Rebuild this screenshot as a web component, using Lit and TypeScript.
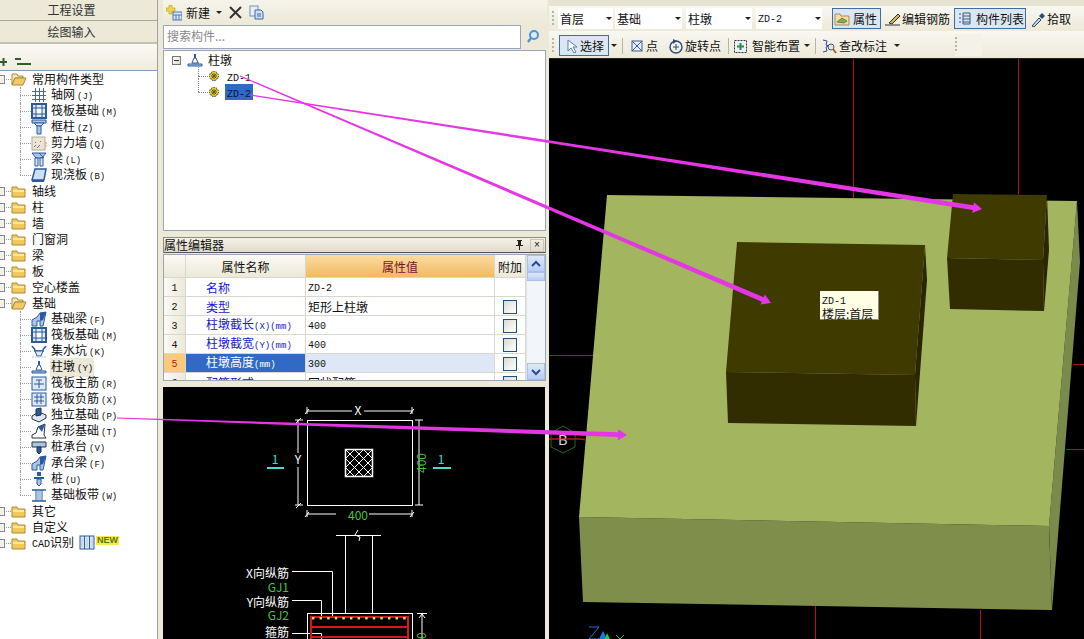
import { LitElement, css, html, svg } from "lit";
import { customElement } from "lit/decorators.js";

const ic = (body: unknown, w = 16, h = 16) =>
  html`<svg class="ic" width=${w} height=${h} viewBox="0 0 ${w} ${h}">${body}</svg>`;

const B = "#2a5a9c";
const L = "#a9c6ea";

const icons: Record<string, unknown> = {
  closed: svg`<path d="M1 4h5l1 2h7v8H1z" fill="#f3c95c" stroke="#a88a3a"/><path d="M2 7h11v2H2z" fill="#fbe9a8"/>`,
  open: svg`<path d="M1 3h5l1 2h5v2H4l-3 7z" fill="#f7e7b4" stroke="#a88a3a"/><path d="M4 7h11l-3 7H1z" fill="#f1ca6a" stroke="#a88a3a"/>`,
  grid: svg`<path d="M1 4.5h14M1 8.5h14M1 12.5h14M4.5 1v14M8.5 1v14M12.5 1v14" stroke="#3a6cb4" fill="none"/>`,
  raft: svg`<rect x="1" y="1" width="14" height="14" fill="#dfe9f6" stroke=${B} stroke-width="2"/><rect x="5" y="5" width="6" height="6" fill="#fff" stroke=${B}/><path d="M1 5h4M11 5h4M1 11h4M11 11h4M5 1v4M11 1v4M5 11v4M11 11v4" stroke=${B}/>`,
  column: svg`<path d="M1 1h14v3H1z" fill=${L} stroke=${B}/><path d="M3 4h10l-3 3H6z" fill="#dfe9f6" stroke=${B}/><path d="M6 7h4v8H6z" fill=${L} stroke=${B}/>`,
  wall: svg`<rect x="1" y="2" width="13" height="13" fill="#ece4d6" stroke="#b9a98f"/><path d="M3 12l2-2M6 13l3-3M4 7l1 1M9 6l1 1" stroke="#777"/><path d="M14 8h2M14 11h2" stroke="#e89a3c"/>`,
  beam: svg`<path d="M1 2h14l-4 5H5z" fill=${L} stroke=${B}/><path d="M4 7h3v8H4zM9 7h3v8H9z" fill="#dfe9f6" stroke=${B}/><path d="M8 2l5 5" stroke=${B}/>`,
  slab: svg`<path d="M4 2h11l-2 11H1z" fill="#cfe0f5" stroke=${B} stroke-width="1.5"/><path d="M1 13h12v2H1z" fill=${B}/>`,
  fbeam: svg`<path d="M1 15V9l5-3 3-4 6-1-3 14H9v-5H6v5z" fill=${L} stroke=${B}/><path d="M9 2l6-1-3 8-3 1z" fill=${B}/>`,
  pit: svg`<path d="M1 3c1 2 3 2 3 5h8c0-3 2-3 3-5" fill="none" stroke=${B} stroke-width="1.5"/><path d="M4 8l2 5h4l2-5z" fill="#dfe9f6" stroke=${B}/><path d="M1 14h14" stroke=${L} stroke-dasharray="2 1"/>`,
  pier: svg`<path d="M1 12h14v2H1z" fill=${L} stroke=${B}/><path d="M5 11l2-5h2l2 5z" fill="#fff" stroke=${B}/><path d="M7 2h2v4H7z" fill=${B}/>`,
  rmain: svg`<rect x="1" y="2" width="14" height="13" fill="#dfe9f6" stroke=${B}/><path d="M3 9h10M8 5v8M5 5h6" stroke=${B} fill="none"/>`,
  rneg: svg`<rect x="1" y="2" width="14" height="13" fill="#dfe9f6" stroke=${B}/><path d="M3 6h10M3 10h10M6 3v10M10 3v10" stroke=${B} fill="none"/>`,
  iso: svg`<path d="M1 9l7-4 7 3v3l-7 4-7-3z" fill="#dfe9f6" stroke="#234"/><path d="M5 2l5-1v7l-5 1z" fill=${B} stroke="#234"/>`,
  strip: svg`<path d="M1 15v-3l4-2 2-6 7-3-1 11 2 3z" fill="#fff" stroke="#234"/><path d="M7 4l7-3-3 8z" fill=${B}/>`,
  cap: svg`<path d="M1 3h14v5H1z" fill=${L} stroke="#234"/><path d="M6 8h4v5l-2 2-2-2z" fill=${B} stroke="#234"/>`,
  pile: svg`<path d="M6 1h4v4H6zM3 6h10v2H3z" fill=${B}/><path d="M6 8h4v5l-2 2-2-2z" fill=${L} stroke=${B}/>`,
  band: svg`<path d="M1 3h14M1 14h14" stroke=${B} stroke-width="1.5"/><path d="M5 3v11M11 3v11" stroke=${B}/><rect x="6" y="4" width="4" height="9" fill=${L}/>`,
};

const icon = (name: string) => ic(icons[name]);

// ascii runs get a narrower mono font, so they keep the 6px width next to 12px cjk
const txt = (s: string) =>
  html`<span>${s
    .split(/([\x21-\x7e]+)/)
    .map((p, i) => (i % 2 ? html`<span class="l">${p}</span>` : p))}</span>`;

type Leaf = [string, string, string];
const common: Leaf[] = [
  ["轴网", "(J)", "grid"],
  ["筏板基础", "(M)", "raft"],
  ["框柱", "(Z)", "column"],
  ["剪力墙", "(Q)", "wall"],
  ["梁", "(L)", "beam"],
  ["现浇板", "(B)", "slab"],
];
const found: Leaf[] = [
  ["基础梁", "(F)", "fbeam"],
  ["筏板基础", "(M)", "raft"],
  ["集水坑", "(K)", "pit"],
  ["柱墩", "(Y)", "pier"],
  ["筏板主筋", "(R)", "rmain"],
  ["筏板负筋", "(X)", "rneg"],
  ["独立基础", "(P)", "iso"],
  ["条形基础", "(T)", "strip"],
  ["桩承台", "(V)", "cap"],
  ["承台梁", "(F)", "fbeam"],
  ["桩", "(U)", "pile"],
  ["基础板带", "(W)", "band"],
];

const props = [
  ["名称", "ZD-2", false],
  ["类型", "矩形上柱墩", true],
  ["柱墩截长(X)(mm)", "400", true],
  ["柱墩截宽(Y)(mm)", "400", true],
  ["柱墩高度(mm)", "300", true],
  ["配筋形式", "网状配筋", true],
] as [string, string, boolean][];

// tapered pen stroke with a head, as drawn over the screenshot
function arrow(x1: number, y1: number, x2: number, y2: number) {
  const len = Math.hypot(x2 - x1, y2 - y1);
  const ux = (x2 - x1) / len;
  const uy = (y2 - y1) / len;
  const nx = -uy;
  const ny = ux;
  const hx = x2 - ux * 9;
  const hy = y2 - uy * 9;
  const pts = [
    [x1 + nx * 0.6, y1 + ny * 0.6],
    [hx + nx * 2.4, hy + ny * 2.4],
    [hx + nx * 5.5, hy + ny * 5.5],
    [x2, y2],
    [hx - nx * 5.5, hy - ny * 5.5],
    [hx - nx * 2.4, hy - ny * 2.4],
    [x1 - nx * 0.6, y1 - ny * 0.6],
  ];
  return svg`<polygon points=${pts.map((p) => p.join(",")).join(" ")} fill="#e436e4"/>`;
}

@customElement("app-root")
export class AppRoot extends LitElement {
  static styles = css`
    :host {
      display: block;
      position: relative;
      width: 1084px;
      height: 639px;
      overflow: hidden;
      background: #ece9d8;
      font: 12px/16px "Noto Sans CJK SC", "Liberation Sans", sans-serif;
      color: #111;
    }
    .l {
      font-family: "Liberation Mono", monospace;
      font-size: 10px;
    }
    .ic {
      display: block;
      flex: none;
    }
    .win {
      display: grid;
      grid-template-columns: 158px 389px 2px 535px;
      height: 639px;
    }

    /* left column */
    .left {
      display: flex;
      flex-direction: column;
      height: 639px;
      border-right: 1px solid #a0a0a0;
      box-sizing: border-box;
    }
    .tab {
      height: 20px;
      line-height: 19px;
      text-align: center;
      padding-right: 14px;
      border-bottom: 1px solid #aca899;
      background: #ece9d8;
      color: #333;
    }
    .tab + .tab {
      height: 21px;
      line-height: 21px;
      border-bottom: 2px solid #c4c1b0;
    }
    .mini {
      height: 26px;
      display: flex;
      align-items: flex-end;
      gap: 6px;
      padding-bottom: 3px;
      background: linear-gradient(#fbfaf5, #efede0);
      box-sizing: border-box;
    }
    .tree {
      flex: 1;
      background: #fff;
      border-top: 1px solid #7f9db9;
    }
    .row {
      position: relative;
      display: flex;
      align-items: center;
      height: 16px;
      white-space: nowrap;
    }
    .row.top {
      padding-left: 11px;
      gap: 5px;
    }
    .row.top::before {
      content: "";
      position: absolute;
      left: 4px;
      top: 8px;
      width: 7px;
      border-top: 1px dotted #999;
    }
    .row.leaf {
      padding-left: 31px;
      gap: 3px;
    }
    .row.leaf::before {
      content: "";
      position: absolute;
      left: 20px;
      top: 0;
      height: 16px;
      border-left: 1px dotted #999;
    }
    .row.leaf.last::before {
      height: 8px;
    }
    .row.leaf::after {
      content: "";
      position: absolute;
      left: 20px;
      top: 8px;
      width: 11px;
      border-top: 1px dotted #999;
    }
    .exp {
      position: absolute;
      left: -4px;
      top: 4px;
      width: 7px;
      height: 7px;
      border: 1px solid #888;
      background: #f4f2e8;
    }
    .leaf .name {
      padding: 0 1px;
    }
    .leaf .name .l {
      font-size: 9px;
      margin-left: 2px;
    }
    .cur {
      background: #ece9d8;
    }
    .badge {
      font: bold 9px/9px "Liberation Sans", sans-serif;
      background: #ffe94a;
      color: #557a10;
      padding: 0 1px;
      margin: -6px 0 0 -4px;
    }

    /* middle column */
    .mid {
      display: flex;
      flex-direction: column;
      padding-left: 5px;
      height: 639px;
    }
    .bar {
      height: 25px;
      display: flex;
      align-items: center;
      gap: 6px;
      padding-left: 3px;
      background: linear-gradient(#f6f4ea, #ece9d8);
    }
    .new {
      margin-left: -2px;
    }
    .drop {
      width: 0;
      height: 0;
      border: 3px solid transparent;
      border-top: 3px solid #222;
      border-bottom: 0;
      flex: none;
    }
    .search {
      display: flex;
      height: 24px;
      margin-right: 1px;
    }
    .search .box {
      flex: 1;
      height: 22px;
      line-height: 19px;
      padding-left: 3px;
      background: #fff;
      border: 1px solid #9aa7b5;
      color: #888;
    }
    .search .go {
      width: 25px;
      height: 24px;
      display: grid;
      place-items: center;
    }
    .list {
      height: 181px;
      margin-top: 1px;
      margin-right: 1px;
      background: #fff;
      border: 1px solid #9aa7b5;
      box-sizing: border-box;
    }
    .pier-row {
      height: 16px;
      margin-top: 1px;
      padding-left: 8px;
      display: flex;
      align-items: center;
      gap: 6px;
    }
    .pier-row .nm {
      margin-left: -1px;
    }
    .mbox {
      width: 7px;
      height: 7px;
      border: 1px solid #777;
      background: linear-gradient(135deg, #fff, #ddd9c8);
      position: relative;
      flex: none;
    }
    .mbox::after {
      content: "";
      position: absolute;
      left: 1px;
      top: 3px;
      width: 5px;
      height: 1px;
      background: #333;
    }
    .zd {
      position: relative;
      height: 16px;
      display: flex;
      align-items: center;
      padding-left: 44px;
      gap: 5px;
    }
    .zd::before {
      content: "";
      position: absolute;
      left: 34px;
      top: -6px;
      height: 14px;
      border-left: 1px dotted #888;
    }
    .zd::after {
      content: "";
      position: absolute;
      left: 34px;
      top: 8px;
      width: 10px;
      border-top: 1px dotted #888;
    }
    .zd .v {
      padding: 0 2px;
      height: 16px;
      line-height: 16px;
    }
    .zd .v.sel {
      background: #316ac5;
      color: #06163a;
    }
    .strip {
      height: 6px;
    }
    .head {
      height: 16px;
      display: flex;
      align-items: center;
      justify-content: space-between;
      border: 1px solid #8f8c7c;
      border-bottom-color: #555;
      background: linear-gradient(#f5f3e8, #dedbca);
      margin-right: 1px;
      box-sizing: border-box;
    }
    .head .tools {
      display: flex;
      align-items: center;
      gap: 5px;
      padding-right: 1px;
    }
    .xbtn {
      width: 12px;
      height: 11px;
      border: 1px solid #c9c6b6;
      text-align: center;
      font: 10px/10px "Liberation Sans", sans-serif;
    }
    .tablewrap {
      position: relative;
      display: flex;
      height: 127px;
      margin-top: 1px;
      margin-right: 1px;
      border: 1px solid #9aa7b5;
      box-sizing: border-box;
      background: #fff;
      overflow: hidden;
    }
    .table {
      display: grid;
      grid-template-columns: 22px 120px 189px 31px;
      grid-template-rows: 23px;
      grid-auto-rows: 19px;
      width: 362px;
      height: 125px;
      overflow: hidden;
    }
    .table > div {
      box-sizing: border-box;
      border-right: 1px solid #d8d8d0;
      border-bottom: 1px solid #d8d8d0;
      padding-top: 1px;
      display: flex;
      align-items: center;
      white-space: nowrap;
    }
    .table .th {
      justify-content: center;
      background: linear-gradient(#fbfaf5, #ece9d8);
    }
    .table .th.val {
      background: linear-gradient(#fbdca0, #f1b963);
      color: #7a1030;
      padding-left: 0;
    }
    .table .n {
      justify-content: center;
      background: linear-gradient(90deg, #fbfaf5, #ece9d8);
    }
    .table .n.on {
      background: #fbc97c;
      color: #b3261e;
    }
    .table .k {
      padding-left: 20px;
      color: #1818c8;
    }
    .table .k .l {
      font-size: 9px;
    }
    .table .k.on {
      background: #316ac5;
      color: #fff;
    }
    .table .val {
      padding-left: 2px;
    }
    .table .val.on {
      background: #dde7f5;
    }
    .table .c {
      justify-content: center;
    }
    .chk {
      width: 12px;
      height: 12px;
      border: 1px solid #1c5180;
      background: linear-gradient(135deg, #dcdcd4, #fff);
    }
    .sb {
      flex: 1;
      display: flex;
      flex-direction: column;
      background: #f2f6fb;
      border-left: 1px solid #e4e4dc;
    }
    .sb i {
      display: grid;
      place-items: center;
      height: 17px;
      background: linear-gradient(#dfe8fb, #b7cdf5);
      border: 1px solid #a9c0e8;
      box-sizing: border-box;
    }
    .sb i.thumb {
      height: 9px;
    }
    .sb i.end {
      margin-top: auto;
    }
    .cad {
      margin-top: 6px;
      height: 252px;
      background: #000;
      display: block;
    }
    .cad text {
      font-family: "Noto Sans CJK SC", sans-serif;
      font-size: 12px;
      fill: #fff;
    }
    .cad text.g {
      fill: #3fc83f;
    }
    .cad text.c {
      fill: #40e0d0;
    }

    /* right column */
    .right {
      display: flex;
      flex-direction: column;
      height: 639px;
      grid-column: 4;
    }
    .cut {
      height: 6px;
      background: #e6e3d2;
    }
    .tb {
      display: flex;
      align-items: center;
      white-space: nowrap;
      background: linear-gradient(#f9f8f1, #ece9d8);
    }
    .tb.one {
      height: 25px;
    }
    .tb.two {
      height: 28px;
      box-sizing: border-box;
      border-bottom: 1px solid #222;
      padding-top: 2px;
    }
    .grip {
      width: 2px;
      height: 16px;
      margin: 0 4px 0 3px;
      flex: none;
      background: repeating-linear-gradient(#b8b5a4 0 2px, transparent 2px 4px);
    }
    .combo {
      display: flex;
      align-items: center;
      justify-content: space-between;
      width: 66px;
      height: 21px;
      padding: 0 1px 0 2px;
      margin-left: 4px;
      background: #fff;
      box-sizing: border-box;
      flex: none;
    }
    .combo:nth-of-type(1) {
      width: 55px;
      margin-left: 0;
    }
    .combo:nth-of-type(2) {
      width: 67px;
      margin-left: 2px;
    }
    .tbtn {
      display: flex;
      align-items: center;
      gap: 4px;
      height: 21px;
      box-sizing: border-box;
      padding: 0 2px;
      flex: none;
    }
    .tbtn.on {
      border: 1px solid #3a6ea5;
      background: #dce6f2;
    }
    .attr {
      margin-left: 10px;
      width: 49px;
      padding: 0 1px;
      gap: 3px;
    }
    .rebar {
      gap: 2px;
      margin-left: 1px;
    }
    .parts {
      margin-left: 2px;
      width: 72px;
      gap: 3px;
    }
    .pick {
      margin-left: 2px;
      gap: 1px;
    }
    .choose {
      margin-left: 1px;
      width: 50px;
      padding-left: 3px;
      gap: 1px;
    }
    .dp {
      margin-left: 2px;
    }
    .point {
      gap: 2px;
    }
    .turn {
      margin-left: 8px;
      gap: 1px;
      padding-left: 0;
    }
    .smart {
      margin-left: -1px;
      padding: 0;
      gap: 3px;
    }
    .dsmart {
      margin-left: 4px;
    }
    .check {
      padding: 0;
      gap: 2px;
    }
    .dcheck {
      margin-left: 7px;
    }
    .sep {
      width: 1px;
      height: 16px;
      background: #b8b5a4;
      margin: 0 5px;
      flex: none;
    }
    .float {
      position: absolute;
      left: 955px;
      top: 34px;
      width: 27px;
      height: 22px;
      background: #f4f2e8;
      display: flex;
      align-items: center;
    }
    .float .grip {
      margin: 0;
    }
    .scene {
      display: block;
      flex: 1;
      background: #000;
    }
    .scene text {
      font-family: "Liberation Sans", sans-serif;
    }
    .tip {
      position: absolute;
      left: 820px;
      top: 291px;
      width: 59px;
      height: 29px;
      box-sizing: border-box;
      background: #ffffe6;
      border-right: 1px solid #888;
      border-bottom: 1px solid #888;
      padding: 2px 0 0 2px;
      line-height: 12px;
      color: #111;
    }
    .over {
      position: absolute;
      left: 0;
      top: 0;
      pointer-events: none;
    }
  `;

  private leaf(l: Leaf, last: boolean, cur = false) {
    return html`<div class="row leaf ${last ? "last" : ""}">
      ${icon(l[2])}
      <span class="name ${cur ? "cur" : ""}">${l[0]}<span class="l">${l[1]}</span></span>
    </div>`;
  }

  private top(name: string, open = false, extra: unknown = "") {
    return html`<div class="row top">
      <span class="exp"></span>
      ${icon(open ? "open" : "closed")}${txt(name)}${extra}
    </div>`;
  }

  private left() {
    return html`<div class="left">
      <div class="tab">工程设置</div>
      <div class="tab">绘图输入</div>
      <div class="mini">
        ${ic(svg`<path d="M0 9h7M3.5 5v8" stroke="#2d5c2d" stroke-width="2"/>`, 9, 14)}
        ${ic(svg`<path d="M0 6h6M2 11h14" stroke="#2d5c2d" stroke-width="2"/>`, 16, 14)}
      </div>
      <div class="tree">
        ${this.top("常用构件类型", true)}
        ${common.map((l, i) => this.leaf(l, i === common.length - 1))}
        ${["轴线", "柱", "墙", "门窗洞", "梁", "板", "空心楼盖"].map((n) => this.top(n))}
        ${this.top("基础", true)}
        ${found.map((l, i) => this.leaf(l, i === found.length - 1, l[0] === "柱墩"))}
        ${this.top("其它")} ${this.top("自定义")}
        ${this.top(
          "CAD识别",
          false,
          html`${ic(svg`<rect x="1" y="1" width="14" height="13" fill="#dfe9f6" stroke=${B}/><path d="M5.5 1v13M10.5 1v13" stroke=${B}/><path d="M3 3v9M8 3v9M13 3v9" stroke=${L}/>`)}<span class="badge">NEW</span>`
        )}
      </div>
    </div>`;
  }

  private mid() {
    const gear = ic(
      svg`<circle cx="6" cy="6" r="4.5" fill="#e8d020" stroke="#333" stroke-dasharray="1.5 1"/><path d="M3 6h6M6 3v6M3.5 3.5l5 5M8.5 3.5l-5 5" stroke="#554"/>`,
      12,
      12
    );
    return html`<div class="mid">
      <div class="bar">
        ${ic(svg`<path d="M3 0h3v3h3v3H6v3H3V6H0V3h3z" fill="#f3d34a" stroke="#b89a20" stroke-width=".6"/><rect x="7" y="7" width="9" height="8" fill="#dbe6f5" stroke="#4a78b5"/><path d="M7 10h9M10 10v5M13 10v5" stroke="#4a78b5"/>`)}
        <span class="new">新建</span>
        <span class="drop"></span>
        ${ic(svg`<path d="M2 2l11 11M13 2L2 13" stroke="#333" stroke-width="2"/>`, 15, 15)}
        ${ic(svg`<rect x="1" y="1" width="8" height="10" fill="#e8effa" stroke="#6d8fc0"/><path d="M6 5h6l2 2v7H6z" fill="#cfe0f5" stroke="#3a67a8"/><path d="M8 9h4M8 11h4" stroke="#3a67a8"/>`)}
      </div>
      <div class="search">
        <div class="box">搜索构件...</div>
        <div class="go">
          ${ic(svg`<circle cx="8" cy="6" r="4" fill="#dcecfb" stroke="#4f93d2" stroke-width="2"/><path d="M5 9l-3 4" stroke="#4f93d2" stroke-width="2.4"/>`)}
        </div>
      </div>
      <div class="list">
        <div class="pier-row"><span class="mbox"></span>${icon("pier")}<span class="nm">柱墩</span></div>
        <div class="zd">${gear}<span class="v">${txt("ZD-1")}</span></div>
        <div class="zd">${gear}<span class="v sel">${txt("ZD-2")}</span></div>
      </div>
      <div class="strip"></div>
      <div class="head">
        <span>属性编辑器</span>
        <span class="tools">
          ${ic(svg`<path d="M3 1h5v1H7v4h2v1H6v4H5V7H2V6h2V2H3z" fill="#222"/>`, 11, 12)}
          <span class="xbtn">×</span>
        </span>
      </div>
      ${this.table()}
      ${this.cad()}
    </div>`;
  }

  private table() {
    return html`<div class="tablewrap">
      <div class="table">
        <div class="th"></div>
        <div class="th">属性名称</div>
        <div class="th val">属性值</div>
        <div class="th">附加</div>
        ${props.map((p, i) => {
          const on = i === 4 ? "on" : "";
          return html`
            <div class="n ${on}">${txt(String(i + 1))}</div>
            <div class="k ${on}">${txt(p[0])}</div>
            <div class="val ${on}">${txt(p[1])}</div>
            <div class="c">${p[2] ? html`<span class="chk"></span>` : ""}</div>
          `;
        })}
      </div>
      <div class="sb">
        <i>${ic(svg`<path d="M1 6l4-4 4 4" fill="none" stroke="#2a4d8f" stroke-width="2"/>`, 10, 8)}</i>
        <i class="thumb"></i>
        <i class="end">${ic(svg`<path d="M1 2l4 4 4-4" fill="none" stroke="#2a4d8f" stroke-width="2"/>`, 10, 8)}</i>
      </div>
    </div>`;
  }

  private cad() {
    const dots = Array.from({ length: 13 }, (_, i) => 312 + i * 7.6);
    const hatch = [0, 9, 18, 27].map((d) => svg`
      <path d="M${345 + d} 449L373 ${477 - d}M345 ${449 + d}L${373 - d} 477M${373 - d} 449L345 ${477 - d}M373 ${449 + d}L${345 + d} 477"/>`);
    return html`<svg class="cad" width="382" height="252" viewBox="163 387 382 252">
      <g stroke="#fff" fill="none">
        <rect x="307.5" y="420.5" width="105" height="85"/>
        <rect x="345.5" y="449.5" width="27" height="27" stroke-width="1.5"/>
        ${hatch}
        <path d="M307 411h45M364 411h48M305 414l4-5M410 414l4-5M307 407v7M412 407v7"/>
        <path d="M298 420v33M298 467v38M295 420h8M295 505h8M296 423l5-5M296 508l5-5"/>
        <path d="M419 420v85M415 420h8M415 505h8"/>
        <path d="M307 514h29M369 514h43M305 517l4-5M410 517l4-5M307 510v7M412 510v7"/>
        <path d="M336 535.5h45M345.5 535v78M372.5 535v78M358 530l-3 5 5 2-1 4"/>
        <rect x="307.5" y="613.5" width="105" height="40"/>
        <path d="M292 571.5h40.5v46M292 600.5h29.5v17M292 633.5h29.5v8"/>
        <path d="M422 614v25M417 613.5h10M419 618l3-4 3 4"/>
      </g>
      <g stroke="#d81818" stroke-width="2" fill="none">
        <rect x="311" y="617" width="97" height="40"/>
        <path d="M311 627h97M311 637h97"/>
      </g>
      <g fill="#ffe95a">${dots.map((x) => svg`<rect x=${x} y="617" width="2.4" height="2.4"/>`)}</g>
      <path d="M267 468h17M433 468h18" stroke="#40e0d0" stroke-width="2"/>
      <text x="275" y="464" class="c" text-anchor="middle">1</text>
      <text x="441" y="464" class="c" text-anchor="middle">1</text>
      <text x="358" y="415" text-anchor="middle">X</text>
      <text x="298" y="464" text-anchor="middle">Y</text>
      <text x="358" y="520" class="g" text-anchor="middle">400</text>
      <text transform="translate(426 473) rotate(-90)" class="g">400</text>
      <text transform="translate(426 639) rotate(-90)" class="g">0</text>
      <text x="289" y="578" text-anchor="end">X向纵筋</text>
      <text x="289" y="592" class="g" text-anchor="end">GJ1</text>
      <text x="289" y="607" text-anchor="end">Y向纵筋</text>
      <text x="289" y="620" class="g" text-anchor="end">GJ2</text>
      <text x="289" y="637" text-anchor="end">箍筋</text>
    </svg>`;
  }

  private right() {
    const combo = (t: string) =>
      html`<div class="combo">${txt(t)}<span class="drop"></span></div>`;
    return html`<div class="right">
      <div class="cut"></div>
      <div class="tb one">
        <span class="grip"></span>
        ${combo("首层")} ${combo("基础")} ${combo("柱墩")} ${combo("ZD-2")}
        <div class="tbtn on attr">
          ${ic(svg`<path d="M1 3h5l1 2h8v9H1z" fill="#f6dd9a" stroke="#a86"/><path d="M3 11l5-4 5 3-3 2z" fill="#7fb23a" stroke="#586"/>`)}
          <span>属性</span>
        </div>
        <div class="tbtn rebar">
          ${ic(svg`<path d="M1 14h15" stroke="#333"/><path d="M5 12L14 3l2 2-8 8z" fill="#d8b050" stroke="#333"/>`)}
          <span>编辑钢筋</span>
        </div>
        <div class="tbtn on parts">
          ${ic(svg`<path d="M2 3h2M2 7h2M2 11h2M6 2h7v11H6zM6 5h7M6 8h7M6 11h7" stroke="#3a5a7a" fill="none"/>`)}
          <span>构件列表</span>
        </div>
        <div class="tbtn pick">
          ${ic(svg`<path d="M2 15l7-8 2 2-7 7z" fill="#bcd6ee" stroke="#345"/><path d="M9 5l3-3 3 3-3 3z" fill="#2a4d7c"/>`)}
          <span>拾取</span>
        </div>
      </div>
      <div class="tb two">
        <span class="grip"></span>
        <div class="tbtn on choose">
          ${ic(svg`<path d="M5 2v11l3-3 3 5 2-1-3-5h4z" fill="#fff" stroke="#5f7fa8"/>`)}
          <span>选择</span>
        </div>
        <span class="drop dp"></span>
        <span class="sep"></span>
        <div class="tbtn point">
          ${ic(svg`<rect x="2" y="3" width="10" height="10" fill="#e8eefa" stroke="#3a5a9a"/><path d="M2 3l10 10M12 3L2 13" stroke="#3a5a9a"/>`, 14, 16)}
          <span>点</span>
        </div>
        <div class="tbtn turn">
          ${ic(svg`<circle cx="8" cy="9" r="6" fill="none" stroke="#2a4a7a" stroke-width="1.4"/><path d="M5 1l4 2-4 3z" fill="#2a4a7a"/><path d="M5 9h6M8 6v6" stroke="#2a4a7a"/>`)}
          <span>旋转点</span>
        </div>
        <span class="sep"></span>
        <div class="tbtn smart">
          ${ic(svg`<rect x="1.5" y="2.5" width="12" height="12" fill="#eaf0f8" stroke="#333" stroke-dasharray="2 1"/><path d="M7.5 5v7M4 8.5h7" stroke="#2a8a4a" stroke-width="2"/>`)}
          <span>智能布置</span>
        </div>
        <span class="drop dsmart"></span>
        <span class="sep"></span>
        <div class="tbtn check">
          ${ic(svg`<path d="M2 2l4 1-1 4 3 1-3 1 1 4-4 1" fill="none" stroke="#34a"/><circle cx="10" cy="9" r="3" fill="#dbe6f5" stroke="#555"/><path d="M12 11l3 4" stroke="#964" stroke-width="2"/>`)}
          <span>查改标注</span>
        </div>
        <span class="drop dcheck"></span>
        <div class="float"><span class="grip"></span></div>
      </div>
      ${this.scene()}
    </div>`;
  }

  private scene() {
    return html`<svg class="scene" width="535" height="580" viewBox="549 59 535 580">
      <g stroke="#b01020" fill="none">
        <path d="M853.5 59v139M1018.5 59v136M1073 364.5h11M1066 449.5h18M980.5 610v29M815.5 606v33M549 355.5h60M549 439h36"/>
      </g>
      <polygon points="1077,201 1080,262 1052,610 1049,526" fill="#7a8a4b"/>
      <polygon points="579,517 1049,526 1052,610 583,602" fill="#808e4c"/>
      <polygon points="607,195 1077,201 1049,526 579,517" fill="#a3b55f"/>
      <polygon points="925,245 927,280 916,426 915,375" fill="#2a2700"/>
      <polygon points="726,372 915,375 916,426 728,423" fill="#312d00"/>
      <polygon points="737,242 925,245 915,375 726,372" fill="#3f3a00"/>
      <polygon points="1047,195 1049,250 1044,311 1043,260" fill="#2a2700"/>
      <polygon points="947,258 1043,260 1044,311 950,309" fill="#312d00"/>
      <polygon points="953,194 1047,195 1043,260 947,258" fill="#3f3a00"/>
      <polygon points="563,426 575,433 575,447 563,453 551,447 551,433" fill="none" stroke="#1f6a1f"/>
      <text x="563" y="445" text-anchor="middle" fill="#d8d8d8" font-size="14">B</text>
      <path d="M549 439h30l6 1" stroke="#c01818" fill="none"/>
      <path d="M589 627h10l-10 12h10" fill="none" stroke="#2a6ae0"/>
      <path d="M603 631l-4 8h8z" fill="#1478e8"/>
      <path d="M607 633l-2 6h5z" fill="#18d040"/>
      <path d="M616 635l4 4 4-4" fill="none" stroke="#30c030"/>
    </svg>`;
  }

  render() {
    return html`<div class="win">
        ${this.left()} ${this.mid()}
        <div></div>
        ${this.right()}
      </div>
      <div class="tip">${txt("ZD-1")}<br />楼层:首层</div>
      <svg class="over" width="1084" height="639">
        ${arrow(240, 76, 771, 303)} ${arrow(250, 95, 982, 209)} ${arrow(117, 418, 627, 435)}
      </svg>`;
  }
}
